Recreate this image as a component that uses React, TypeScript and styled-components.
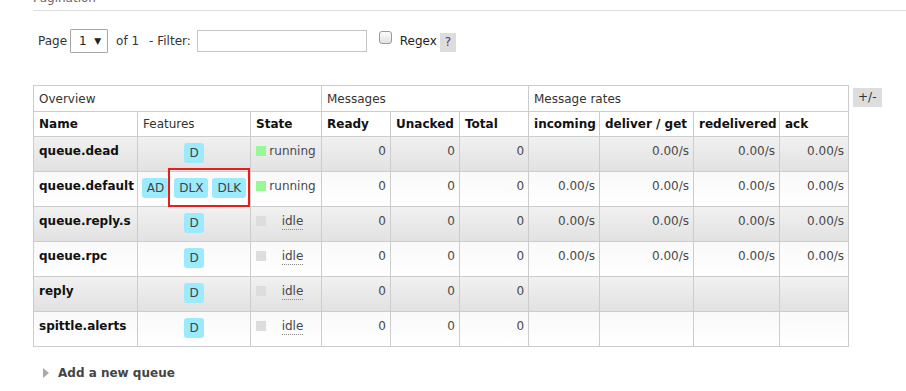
import React from "react";
import styled, { createGlobalStyle, css } from "styled-components";

type Queue = {
  name: string;
  features: string[];
  marked?: string[];
  state: "running" | "idle";
  ready: number;
  unacked: number;
  total: number;
  rates: string[];
};

const QUEUES: Queue[] = [
  { name: "queue.dead", features: ["D"], state: "running", ready: 0, unacked: 0, total: 0, rates: ["", "0.00/s", "0.00/s", "0.00/s"] },
  { name: "queue.default", features: ["AD"], marked: ["DLX", "DLK"], state: "running", ready: 0, unacked: 0, total: 0, rates: ["0.00/s", "0.00/s", "0.00/s", "0.00/s"] },
  { name: "queue.reply.s", features: ["D"], state: "idle", ready: 0, unacked: 0, total: 0, rates: ["0.00/s", "0.00/s", "0.00/s", "0.00/s"] },
  { name: "queue.rpc", features: ["D"], state: "idle", ready: 0, unacked: 0, total: 0, rates: ["0.00/s", "0.00/s", "0.00/s", "0.00/s"] },
  { name: "reply", features: ["D"], state: "idle", ready: 0, unacked: 0, total: 0, rates: ["", "", "", ""] },
  { name: "spittle.alerts", features: ["D"], state: "idle", ready: 0, unacked: 0, total: 0, rates: ["", "", "", ""] },
];

const COLS = [104, 113, 71, 69, 69, 69, 71, 94, 86, 69];

export default function App() {
  return (
    <>
      <GlobalStyle />
      <Page>
        <SectionTitle>Pagination</SectionTitle>
        <PagerRow>
          <span>Page</span>
          <FakeSelect>
            <span>1</span>
            <Arrow>▼</Arrow>
          </FakeSelect>
          <OfText>of 1</OfText>
          <FilterLabel>- Filter:</FilterLabel>
          <FilterInput type="text" />
          <Check />
          <RegexLabel>Regex</RegexLabel>
          <Help>?</Help>
        </PagerRow>

        <TableRow>
          <List>
            <colgroup>
              {COLS.map((w, i) => (
                <col key={i} style={{ width: w }} />
              ))}
            </colgroup>
            <thead>
              <tr>
                <GroupTh colSpan={3}>Overview</GroupTh>
                <GroupTh colSpan={3}>Messages</GroupTh>
                <GroupTh colSpan={4}>Message rates</GroupTh>
              </tr>
              <tr>
                <Th>Name</Th>
                <Th $plain>Features</Th>
                <Th>State</Th>
                <Th>Ready</Th>
                <Th>Unacked</Th>
                <Th>Total</Th>
                <Th>incoming</Th>
                <Th>deliver / get</Th>
                <Th>redelivered</Th>
                <Th>ack</Th>
              </tr>
            </thead>
            <tbody>
              {QUEUES.map((q, i) => (
                <Row key={q.name} $alt={i % 2 === 0}>
                  <NameCell>{q.name}</NameCell>
                  <FeatureCell>
                    <Badges>
                      {q.features.map((f) => (
                        <Badge key={f}>{f}</Badge>
                      ))}
                      {q.marked && (
                        <Marked>
                          {q.marked.map((f) => (
                            <Badge key={f}>{f}</Badge>
                          ))}
                        </Marked>
                      )}
                    </Badges>
                  </FeatureCell>
                  <Td>
                    <StateBox>
                      <Dot $on={q.state === "running"} />
                      <StateText $idle={q.state === "idle"}>{q.state}</StateText>
                    </StateBox>
                  </Td>
                  <NumCell>{q.ready}</NumCell>
                  <NumCell>{q.unacked}</NumCell>
                  <NumCell>{q.total}</NumCell>
                  {q.rates.map((r, j) => (
                    <NumCell key={j}>{r}</NumCell>
                  ))}
                </Row>
              ))}
            </tbody>
          </List>
          <Toggle>+/-</Toggle>
        </TableRow>

        <AddQueue>
          <Caret />
          Add a new queue
        </AddQueue>
      </Page>
    </>
  );
}

const GlobalStyle = createGlobalStyle`
  body {
    margin: 0;
    background: #fff;
    font-family: "DejaVu Sans", Verdana, sans-serif;
    font-size: 12px;
    line-height: 16px;
    color: #484848;
    overflow: hidden;
  }
`;

const Page = styled.div`
  padding-left: 33px;
`;

const SectionTitle = styled.h3`
  margin: -10px 0 0;
  padding: 0 0 4px;
  font-size: 12px;
  font-weight: normal;
  color: #666;
  border-bottom: 1px solid #ddd;
`;

const PagerRow = styled.div`
  display: flex;
  align-items: center;
  margin-top: 18px;
  padding-left: 5px;
  color: #333;
`;

const FakeSelect = styled.div`
  width: 38px;
  height: 24px;
  box-sizing: border-box;
  margin-left: 3px;
  border: 1px solid #a6a6a6;
  border-radius: 1px;
  display: flex;
  align-items: center;
  justify-content: space-between;
  padding: 0 6px 0 8px;
  color: #222;
`;

const Arrow = styled.span`
  font-size: 9px;
`;

const OfText = styled.span`
  margin-left: 8px;
`;

const FilterLabel = styled.span`
  margin-left: 10px;
`;

const FilterInput = styled.input`
  width: 170px;
  height: 22px;
  box-sizing: border-box;
  margin: 0 0 0 6px;
  border: 1px solid #c4c4c4;
  padding: 0 4px;
  outline: none;
`;

const Check = styled.span`
  align-self: flex-start;
  width: 13px;
  height: 13px;
  box-sizing: border-box;
  margin: 2px 0 0 12px;
  border: 1px solid #9a9a9a;
  border-radius: 3px;
  background: linear-gradient(#fdfdfd, #e2e2e2);
`;

const RegexLabel = styled.span`
  margin-left: 8px;
  color: #222;
`;

const Help = styled.span`
  margin: 2px 0 0 3px;
  width: 16px;
  height: 19px;
  line-height: 19px;
  text-align: center;
  background: #ddd;
  color: #5a2c82;
`;

const TableRow = styled.div`
  display: flex;
  align-items: flex-start;
  margin-top: 32px;
`;

const List = styled.table`
  border-collapse: collapse;
  table-layout: fixed;
  width: 815px;
`;

const cellBase = css`
  border: 1px solid #ccc;
  padding: 0 5px;
  text-align: left;
  vertical-align: top;
  white-space: nowrap;
  overflow: hidden;
`;

const GroupTh = styled.th`
  ${cellBase};
  padding-top: 5px;
  padding-bottom: 4px;
  font-weight: normal;
  color: #333;
`;

const Th = styled.th<{ $plain?: boolean }>`
  ${cellBase};
  padding-top: 4px;
  padding-bottom: 4px;
  font-weight: ${({ $plain }) => ($plain ? "normal" : "bold")};
  color: ${({ $plain }) => ($plain ? "#333" : "#111")};
`;

const Row = styled.tr<{ $alt: boolean }>`
  background: ${({ $alt }) =>
    $alt ? "linear-gradient(#f1f1f1, #e1e1e1)" : "linear-gradient(#f9f9f9, #fff)"};
`;

const Td = styled.td`
  ${cellBase};
  padding-top: 6px;
  padding-bottom: 8px;
`;

const NameCell = styled(Td)`
  font-weight: bold;
  color: #111;
`;

const FeatureCell = styled(Td)`
  overflow: visible;
`;

const NumCell = styled(Td)`
  text-align: right;
  padding-right: 4px;
`;

const Badges = styled.div`
  display: flex;
  justify-content: center;
  gap: 5px;
`;

const Marked = styled.span`
  position: relative;
  display: flex;
  gap: 4px;

  &::after {
    content: "";
    position: absolute;
    left: -6px;
    right: -4px;
    top: -10px;
    bottom: -9px;
    border: 2px solid #ea1d1d;
  }
`;

const Badge = styled.span`
  display: inline-block;
  height: 20px;
  line-height: 20px;
  padding: 0 5px;
  border-radius: 3px;
  background: #9beafd;
  color: #444;
`;

const StateBox = styled.div`
  display: flex;
  align-items: flex-start;
`;

const Dot = styled.span<{ $on: boolean }>`
  flex: none;
  width: 10px;
  height: 10px;
  margin-top: 3px;
  margin-right: 3px;
  background: ${({ $on }) => ($on ? "#98f898" : "#ddd")};
`;

const StateText = styled.span<{ $idle: boolean }>`
  flex: 1;
  text-align: center;
  ${({ $idle }) =>
    $idle &&
    css`
      flex: none;
      margin: 0 auto;
      border-bottom: 1px dotted #888;
    `}
`;

const Toggle = styled.span`
  margin: 3px 0 0 4px;
  height: 19px;
  line-height: 19px;
  padding: 0 5px;
  background: #ddd;
  color: #333;
`;

const AddQueue = styled.div`
  display: flex;
  align-items: center;
  margin-top: 18px;
  padding-left: 10px;
  font-weight: bold;
  color: #444;
`;

const Caret = styled.span`
  width: 0;
  height: 0;
  margin-right: 9px;
  border-top: 5px solid transparent;
  border-bottom: 5px solid transparent;
  border-left: 6px solid #aaa;
`;
